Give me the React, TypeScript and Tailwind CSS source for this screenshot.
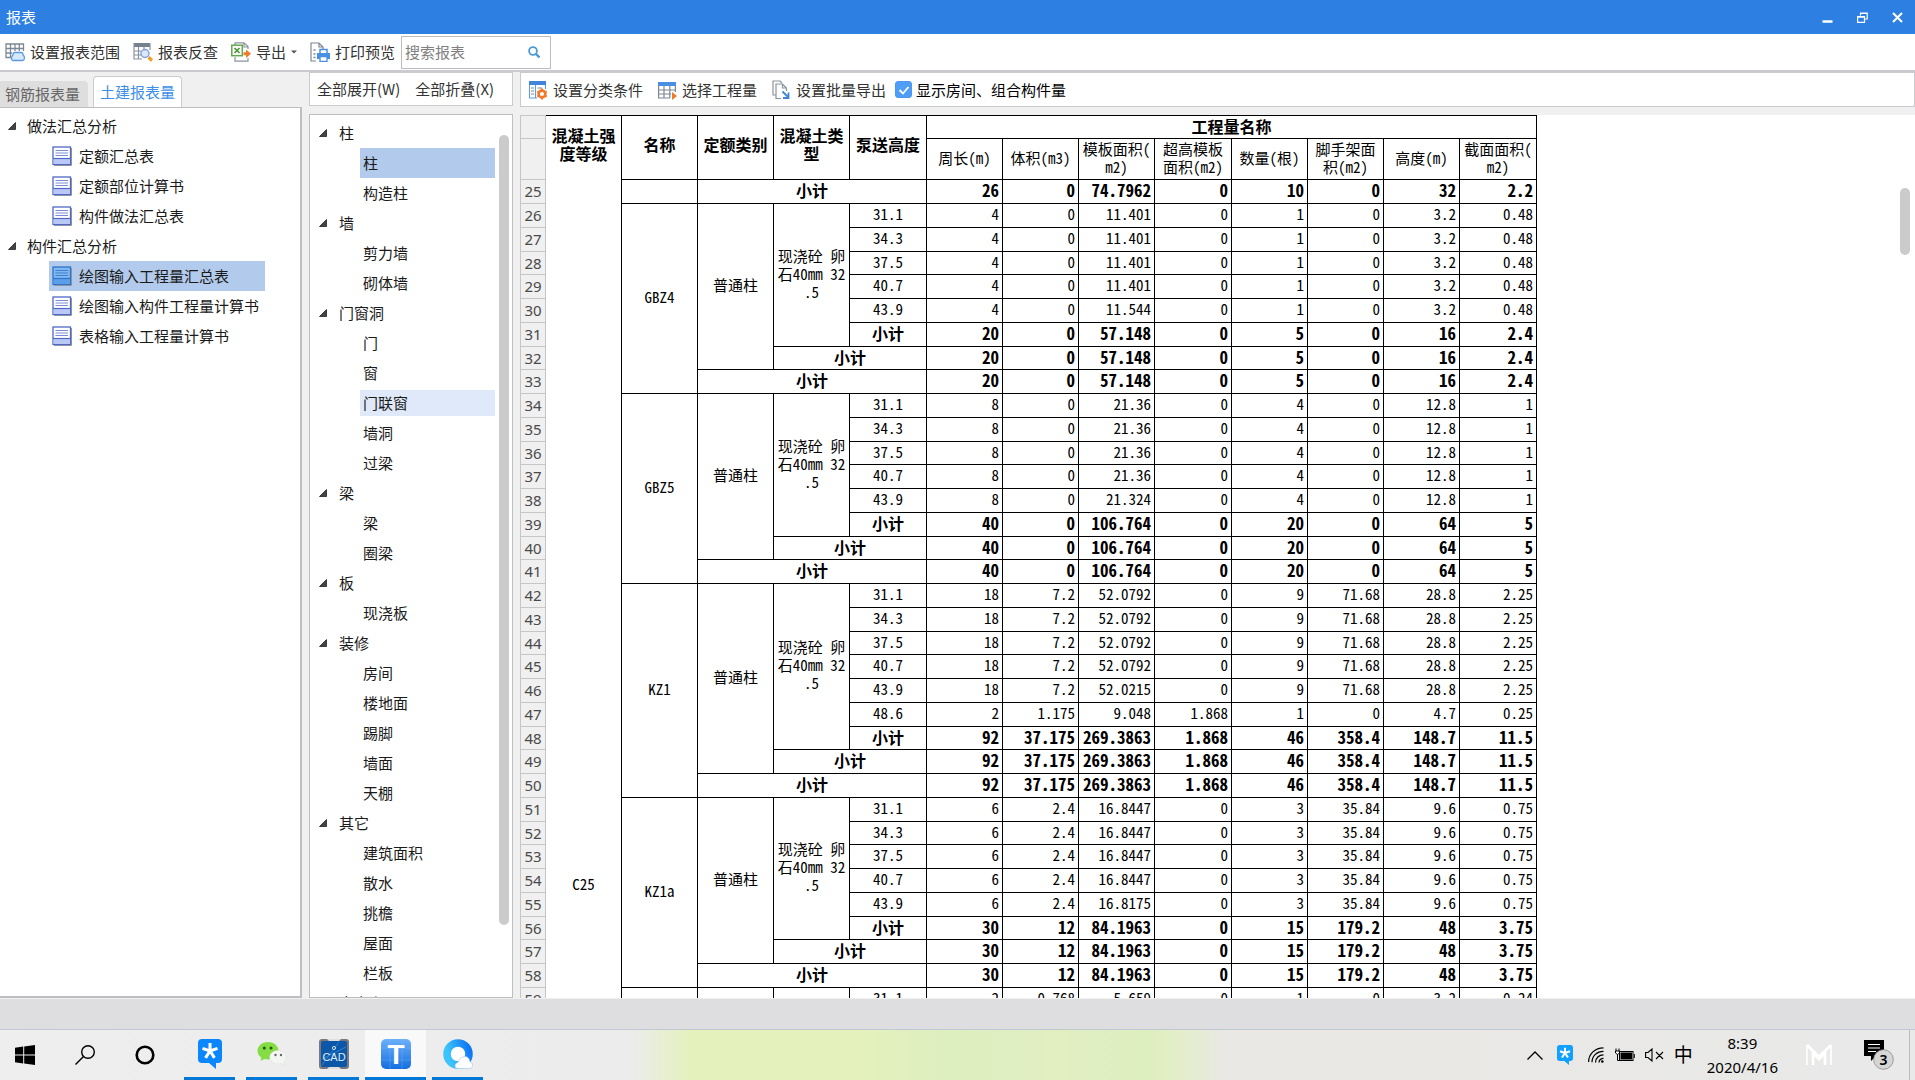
import { Fragment, useState } from "react";
import type { ReactNode } from "react";
import clsx from "clsx";

type TreeNode = { label: string; group?: boolean };
type Group = { name: string; rows: string[][]; total: string[] };

const REPORTS: TreeNode[] = [
  { label: "做法汇总分析", group: true },
  { label: "定额汇总表" },
  { label: "定额部位计算书" },
  { label: "构件做法汇总表" },
  { label: "构件汇总分析", group: true },
  { label: "绘图输入工程量汇总表" },
  { label: "绘图输入构件工程量计算书" },
  { label: "表格输入工程量计算书" },
];

const COMPONENTS = [
  { name: "柱", items: ["柱", "构造柱"] },
  { name: "墙", items: ["剪力墙", "砌体墙"] },
  { name: "门窗洞", items: ["门", "窗", "门联窗", "墙洞", "过梁"] },
  { name: "梁", items: ["梁", "圈梁"] },
  { name: "板", items: ["现浇板"] },
  { name: "装修", items: ["房间", "楼地面", "踢脚", "墙面", "天棚"] },
  { name: "其它", items: ["建筑面积", "散水", "挑檐", "屋面", "栏板"] },
  { name: "自定义", items: [] },
];

const HEIGHTS = ["31.1", "34.3", "37.5", "40.7", "43.9"];

// five storeys share one set of values except for the modelled area
const storeys = (areas: string[], base: string[]) =>
  HEIGHTS.map((h, i) => [h, base[0], base[1], areas[i], ...base.slice(2)]);

const GROUPS: Group[] = [
  {
    name: "GBZ4",
    rows: storeys(["11.401", "11.401", "11.401", "11.401", "11.544"], ["4", "0", "0", "1", "0", "3.2", "0.48"]),
    total: ["20", "0", "57.148", "0", "5", "0", "16", "2.4"],
  },
  {
    name: "GBZ5",
    rows: storeys(["21.36", "21.36", "21.36", "21.36", "21.324"], ["8", "0", "0", "4", "0", "12.8", "1"]),
    total: ["40", "0", "106.764", "0", "20", "0", "64", "5"],
  },
  {
    name: "KZ1",
    rows: [
      ...storeys(
        ["52.0792", "52.0792", "52.0792", "52.0792", "52.0215"],
        ["18", "7.2", "0", "9", "71.68", "28.8", "2.25"]
      ),
      ["48.6", "2", "1.175", "9.048", "1.868", "1", "0", "4.7", "0.25"],
    ],
    total: ["92", "37.175", "269.3863", "1.868", "46", "358.4", "148.7", "11.5"],
  },
  {
    name: "KZ1a",
    rows: storeys(
      ["16.8447", "16.8447", "16.8447", "16.8447", "16.8175"],
      ["6", "2.4", "0", "3", "35.84", "9.6", "0.75"]
    ),
    total: ["30", "12", "84.1963", "0", "15", "179.2", "48", "3.75"],
  },
];

const QUANTITIES = [
  ["周长(m)"],
  ["体积(m3)"],
  ["模板面积(", "m2)"],
  ["超高模板", "面积(m2)"],
  ["数量(根)"],
  ["脚手架面", "积(m2)"],
  ["高度(m)"],
  ["截面面积(", "m2)"],
];

const cell = "border-r border-b border-black p-0 pb-[3px]";

function Lines({ of }: { of: string[] }) {
  return (
    <>
      {of.map((line, i) => (
        <Fragment key={i}>
          {i > 0 && <br />}
          {line}
        </Fragment>
      ))}
    </>
  );
}

function Values({ values, bold }: { values: string[]; bold?: boolean }) {
  return (
    <>
      {values.map((v, i) => (
        <td key={i} className={clsx(cell, "pr-[3px] text-right", bold && "text-[17px] font-bold")}>
          {v}
        </td>
      ))}
    </>
  );
}

function RowNumber({ n }: { n: number }) {
  return (
    <th
      scope="row"
      className={clsx(
        n % 4 === 0 ? "h-[23px]" : "h-6",
        "border-x border-b border-[#c6c6c6] bg-[#f0f0f0] p-0 pb-px text-center font-['Noto_Sans',sans-serif] text-[15px] font-normal text-[#4a4a4a]"
      )}
    >
      {n}
    </th>
  );
}

function Subtotal({ span }: { span: number }) {
  return (
    <td colSpan={span} className={clsx(cell, "text-center text-base/[18px] font-bold")}>
      小计
    </td>
  );
}

function GroupRows({ group, start }: { group: Group; start: number }) {
  const n = group.rows.length;
  return (
    <>
      {group.rows.map(([height, ...values], i) => (
        <tr key={i}>
          <RowNumber n={start + i} />
          {i === 0 && (
            <>
              <td rowSpan={n + 3} className={clsx(cell, "text-center")}>
                {group.name}
              </td>
              <td rowSpan={n + 2} className={clsx(cell, "text-center")}>
                普通柱
              </td>
              <td rowSpan={n + 1} className={clsx(cell, "text-center")}>
                <Lines of={["现浇砼 卵", "石40mm 32", ".5"]} />
              </td>
            </>
          )}
          <td className={clsx(cell, "text-center")}>{height}</td>
          <Values values={values} />
        </tr>
      ))}
      {[1, 2, 3].map((span, i) => (
        <tr key={span}>
          <RowNumber n={start + n + i} />
          <Subtotal span={span} />
          <Values values={group.total} bold />
        </tr>
      ))}
    </>
  );
}

function ReportTable() {
  let next = 26;
  return (
    <table className="w-[1017px] table-fixed border-separate border-spacing-0 font-['Noto_Sans_CJK_SC',sans-serif] text-[15px]/[18px] text-black [font-feature-settings:'hwid']">
      <colgroup>
        <col className="w-[26px]" />
        <col className="w-[76px]" />
        {Array.from({ length: 12 }, (_, i) => (
          <col key={i} className={i % 4 === 3 ? "w-[77px]" : "w-[76px]"} />
        ))}
      </colgroup>
      <thead className="text-base/[18px]">
        <tr>
          <td className="h-6 border border-[#c6c6c6] bg-[#f0f0f0]" />
          {[["混凝土强", "度等级"], ["名称"], ["定额类别"], ["混凝土类", "型"], ["泵送高度"]].map((label, i) => (
            <th
              key={i}
              rowSpan={2}
              className={clsx("border-t border-r border-black p-0 pb-2", i > 0 && "border-b")}
            >
              <Lines of={label} />
            </th>
          ))}
          <th colSpan={8} className={clsx(cell, "border-t")}>
            工程量名称
          </th>
        </tr>
        <tr>
          <td className="h-[41px] border-x border-b border-[#c6c6c6] bg-[#f0f0f0]" />
          {QUANTITIES.map((label, i) => (
            <th key={i} className={clsx(cell, "text-[15px] font-normal")}>
              <Lines of={label} />
            </th>
          ))}
        </tr>
      </thead>
      <tbody>
        <tr>
          <RowNumber n={25} />
          <td rowSpan={35} className="border-r border-black p-0 pt-[695px] text-center align-top">
            C25
          </td>
          <td className={cell} />
          <Subtotal span={3} />
          <Values values={["26", "0", "74.7962", "0", "10", "0", "32", "2.2"]} bold />
        </tr>
        {GROUPS.map((group) => {
          const start = next;
          next += group.rows.length + 3;
          return <GroupRows key={group.name} group={group} start={start} />;
        })}
        <tr>
          <RowNumber n={59} />
          <td className={cell} />
          <td className={cell} />
          <td className={cell} />
          <td className={clsx(cell, "text-center")}>31.1</td>
          <Values values={["2", "0.768", "5.659", "0", "1", "0", "3.2", "0.24"]} />
        </tr>
      </tbody>
    </table>
  );
}

function Triangle({ className }: { className?: string }) {
  return (
    <svg viewBox="0 0 8 8" className={clsx("size-2 shrink-0", className)} aria-hidden="true">
      <path d="M7.5 0.5V7.5H0.5Z" fill="#444" stroke="#222" strokeWidth="0.8" />
    </svg>
  );
}

function ReportIcon({ active }: { active: boolean }) {
  return (
    <svg viewBox="0 0 20 20" className="size-5 shrink-0" aria-hidden="true">
      <path d="M2 19.5H19.5V2" fill="none" stroke="#9a9a9a" strokeWidth="1" />
      <rect x="1" y="1" width="17.5" height="17.5" fill={active ? "#7fb8f2" : "#fff"} stroke={active ? "#2f74c8" : "#5068c8"} strokeWidth="1.3" />
      <rect x="1.6" y="12.5" width="16.3" height="5.5" fill={active ? "#5b9fe8" : "#b9c8f7"} />
      <path d="M1 12.5H18.5" stroke={active ? "#2f74c8" : "#5068c8"} strokeWidth="1.2" />
      <path d="M3.5 4.5H16M3.5 7H16M3.5 9.5H16" stroke={active ? "#3f7fcc" : "#7a8cd8"} strokeWidth="1" />
    </svg>
  );
}

function RangeIcon() {
  return (
    <svg viewBox="0 0 20 20" className="size-5" fill="none" stroke="#7d8894" strokeWidth="1.3" aria-hidden="true">
      <path d="M6 15.5H1V2H18.5V9M1 6.5H18.5M1 11H7M5.5 2V15M10 2V9M14.3 2V9" />
      <rect x="8" y="10.5" width="10" height="6" rx="2" fill="#d6e8fb" stroke="#5b9be6" />
      <path d="M8 13.5C6 13.5 6 18.5 8 18.5H17.5C20 18.5 20 13.5 18 13.5" fill="#d6e8fb" stroke="#5b9be6" />
    </svg>
  );
}

function CheckIcon() {
  return (
    <svg viewBox="0 0 20 20" className="size-5" fill="none" aria-hidden="true">
      <path d="M1 1H17V5H1Z" fill="#75818d" />
      <path d="M1 1V17H9M17 1V8M1 9H8M1 13H8M5.5 5V17M11 5V7" stroke="#8a949e" strokeWidth="1.2" />
      <circle cx="12" cy="11.5" r="4" fill="#dbe7fb" stroke="#7f9fe0" strokeWidth="1.4" />
      <path d="M16.5 14L20 17L18 20L14.5 16.5Z" fill="#f59a22" />
    </svg>
  );
}

function ExportIcon() {
  return (
    <svg viewBox="0 0 20 20" className="size-5" fill="none" aria-hidden="true">
      <path d="M4 3V0.8H13L17 4.5V7M4 15V19.2H17V16M13 1V5H17" stroke="#8a949e" strokeWidth="1.2" />
      <rect x="0.8" y="3.2" width="10.5" height="10.5" fill="#fff" stroke="#62a84c" strokeWidth="1.5" />
      <path d="M3.5 6L8.5 11M8.5 6L3.5 11" stroke="#4c9638" strokeWidth="1.7" />
      <path d="M12.5 10.3H15V7.5L20 11.7L15 16V13.2H12.5Z" fill="#f07a2a" />
    </svg>
  );
}

function PrintIcon() {
  return (
    <svg viewBox="0 0 20 20" className="size-5" fill="none" aria-hidden="true">
      <path d="M6 19H1V1H9L13 5V7M9 1V5H13" stroke="#7d8894" strokeWidth="1.2" />
      <path d="M3.5 8H5.5M3.5 12H5.5M3.5 15.5H5.5" stroke="#7d8894" strokeWidth="1.6" />
      <path d="M10 11V7.5H17V11" stroke="#4a90e2" strokeWidth="1.5" />
      <path d="M7 11H20V17H7Z" fill="#4a90e2" />
      <path d="M10 14.5H17V19.3H10Z" fill="#fff" stroke="#4a90e2" strokeWidth="1.3" />
    </svg>
  );
}

function ClassifyIcon() {
  return (
    <svg viewBox="0 0 20 20" className="size-5" fill="none" aria-hidden="true">
      <path d="M1 1H18V5H1Z" fill="#3f86da" />
      <path d="M1.5 5V18H9M17.5 5V9M7.5 5V18" stroke="#5f9de3" strokeWidth="1.1" />
      <path d="M3 8H6M3 11H6M3 14H6M9.5 8H14" stroke="#7d8894" strokeWidth="1.1" />
      <circle cx="14" cy="14" r="3.4" stroke="#f07a2a" strokeWidth="2.6" />
      <path d="M14 8.6V10M14 18V19.4M9.3 11.3L10.6 12M17.4 16L18.7 16.7M9.3 16.7L10.6 16M17.4 12L18.7 11.3" stroke="#f07a2a" strokeWidth="2" />
    </svg>
  );
}

function PickIcon() {
  return (
    <svg viewBox="0 0 20 20" className="size-5" fill="none" aria-hidden="true">
      <path d="M1 2H19V6H1Z" fill="#4a90e2" />
      <path d="M1.6 6V18H13M18.4 6V12M1.6 10H18.4M1.6 14H14M7 6V18M12.8 6V18" stroke="#7d8894" strokeWidth="1.2" />
      <path d="M15 12L20 16L15 20Z" fill="#f07a2a" />
    </svg>
  );
}

function BatchIcon() {
  return (
    <svg viewBox="0 0 20 20" className="size-5" fill="none" aria-hidden="true">
      <path d="M5 15H2V1H9L11 3" stroke="#8a949e" strokeWidth="1.2" />
      <path d="M10 18.5H5V4H11.5L15.5 8V11M11.5 4V8H15.5" stroke="#8a949e" strokeWidth="1.2" />
      <path d="M11.5 11.5L17 17M17.5 12.5V18H12" stroke="#3f86da" strokeWidth="1.8" />
    </svg>
  );
}

function ToolButton({ icon, children }: { icon?: ReactNode; children: ReactNode }) {
  return (
    <button type="button" className="flex h-8 items-center gap-[5px] rounded px-[5px] whitespace-nowrap text-[#333] hover:bg-gray-100">
      {icon}
      {children}
    </button>
  );
}

function TimLogo({ className, fill }: { className: string; fill: string }) {
  return (
    <svg viewBox="0 0 24 30" className={className} aria-hidden="true">
      <path d="M4 0H20Q24 0 24 4V20Q24 24 20 24H18V30L11 24H4Q0 24 0 20V4Q0 0 4 0Z" fill={fill} />
      <path d="M12 12V4M12 12L4.5 9.300M12 12L19.500 9.300M12 12L7.500 18.800M12 12L16.500 18.800" stroke="#fff" strokeWidth="3" />
    </svg>
  );
}

function AppButton({ label, active, children }: { label: string; active?: boolean; children: ReactNode }) {
  return (
    <button
      type="button"
      aria-label={label}
      className={clsx(
        "flex h-full items-center justify-center border-b-[3px] border-[#0078d7]",
        active ? "-mx-[5px] w-[61px] bg-[#f9f9f9]" : "w-[51px]"
      )}
    >
      {children}
    </button>
  );
}

function Taskbar() {
  return (
    <footer className="flex h-[51px] shrink-0 items-center justify-between border-t border-[#c0c8d4] bg-[linear-gradient(90deg,#eeeeee_0%,#ececec_33%,#e4f1bd_36%,#e4f1bd_45%,#ddeebf_50%,#e1efc1_55%,#ddeebf_60%,#e2efc4_61%,#e9e8e4_64%,#e9e9e9_100%)]">
      <div className="flex h-full items-center">
        <div className="flex items-center gap-[10px]">
          <button type="button" aria-label="开始" className="flex w-[50px] justify-center">
            <svg viewBox="0 0 20 20" className="size-5" aria-hidden="true">
              <path d="M0 2.8L8.2 1.6V9.5H0ZM9.2 1.5L20 0V9.5H9.2ZM0 10.5H8.2V18.4L0 17.2ZM9.2 10.5H20V20L9.2 18.5Z" />
            </svg>
          </button>
          <button type="button" aria-label="搜索" className="flex w-[50px] justify-center">
            <svg viewBox="0 0 20 20" className="size-5" fill="none" stroke="#000" strokeWidth="1.4" aria-hidden="true">
              <circle cx="13" cy="7" r="6.3" />
              <path d="M8.5 11.5L0.5 19.5" />
            </svg>
          </button>
          <button type="button" aria-label="助手" className="flex w-[50px] justify-center">
            <svg viewBox="0 0 20 20" className="size-5" fill="none" stroke="#000" strokeWidth="2.6" aria-hidden="true">
              <circle cx="10" cy="10" r="8.3" />
            </svg>
          </button>
        </div>
        <div className="ml-[14px] flex h-full items-center gap-[11px]">
          <AppButton label="TIM">
            <TimLogo className="h-[30px] w-6" fill="#0a86ff" />
          </AppButton>
          <AppButton label="微信">
            <svg viewBox="0 0 30 26" className="h-[26px] w-[30px]" aria-hidden="true">
              <path d="M11 1C5 1 0.5 5 0.5 9.7C0.5 12.5 2 15 4.300 16.500L3.500 20L7.500 18C8.600 18.300 9.800 18.500 11 18.500C17 18.500 21.500 14.500 21.500 9.700C21.500 5 17 1 11 1Z" fill="#86dc44" />
              <circle cx="7.300" cy="7" r="1.500" fill="#1f5a10" />
              <circle cx="14" cy="7" r="1.500" fill="#1f5a10" />
              <path d="M21 9.500C16.300 9.500 12.800 12.500 12.800 16.200C12.800 20 16.300 23 21 23C22 23 23 22.800 23.800 22.600L27.300 24.500L26.600 21.500C28.400 20.300 29.300 18.400 29.300 16.200C29.300 12.500 25.700 9.500 21 9.500Z" fill="#f4f6f4" stroke="#dcdcdc" strokeWidth="0.500" />
              <circle cx="18.500" cy="14" r="1.200" fill="#666" />
              <circle cx="24" cy="14" r="1.200" fill="#666" />
            </svg>
          </AppButton>
          <AppButton label="CAD">
            <svg viewBox="0 0 30 30" className="size-[30px]" aria-hidden="true">
              <rect width="30" height="30" rx="3" fill="#77797d" />
              <path d="M8 0H22L20 2H10ZM8 30H22L20 28H10Z" fill="#e0e0e0" />
              <rect x="2" y="2" width="26" height="26" rx="2" fill="#0d57a8" />
              <path d="M3 20L27 8M3 26L20 3" stroke="#2e7fd0" strokeWidth="1" />
              <circle cx="15" cy="9" r="1.600" fill="none" stroke="#cfe2f5" />
              <text x="15" y="21.500" textAnchor="middle" fontFamily="Liberation Sans, sans-serif" fontSize="11" fill="#dcecff">
                CAD
              </text>
            </svg>
          </AppButton>
          <AppButton label="土建计量" active>
            <svg viewBox="0 0 30 30" className="size-[30px]" aria-hidden="true">
              <defs>
                <linearGradient id="civil" x1="0" y1="0" x2="0" y2="1">
                  <stop offset="0" stopColor="#6cb0fa" />
                  <stop offset="1" stopColor="#146fe0" />
                </linearGradient>
              </defs>
              <rect width="30" height="30" rx="5" fill="url(#civil)" />
              <path d="M0 9H30M0 21H30M9 0V30M21 0V30" stroke="#8cc2ff" strokeWidth="0.500" opacity="0.600" />
              <text x="15" y="24.500" textAnchor="middle" fontFamily="Liberation Sans, sans-serif" fontWeight="bold" fontSize="28" fill="#fff">
                T
              </text>
            </svg>
          </AppButton>
          <AppButton label="浏览器">
            <svg viewBox="0 0 30 30" className="size-[30px]" aria-hidden="true">
              <defs>
                <linearGradient id="ring" x1="0" y1="0.300" x2="1" y2="0">
                  <stop offset="0" stopColor="#3cc4fb" />
                  <stop offset="1" stopColor="#0d74f2" />
                </linearGradient>
              </defs>
              <circle cx="15" cy="15" r="11" fill="#fff" stroke="url(#ring)" strokeWidth="7.500" />
              <path d="M15 29.500C11 29.500 11 24 15 23.500C16 20 19 17.500 22 17.500C25 17.500 26.500 20 26.800 22.500C30.500 23.500 30.500 29.500 26.500 29.500Z" fill="#fff" stroke="#9cc4ee" strokeWidth="0.600" />
            </svg>
          </AppButton>
        </div>
      </div>

      <div className="flex h-full items-center font-['Noto_Sans','Noto_Sans_CJK_SC',sans-serif] text-black">
        <svg viewBox="0 0 16 9" className="mr-[14px] h-[9px] w-4" fill="none" stroke="#000" strokeWidth="1.3" aria-hidden="true">
          <path d="M0.500 8.500L8 1L15.500 8.500" />
        </svg>
        <TimLogo className="mr-[15px] h-5 w-4" fill="#12a0ff" />
        <svg viewBox="0 0 16 16" className="mr-[11px] size-4" fill="none" stroke="#000" strokeWidth="1.200" aria-hidden="true">
          <path d="M0.600 15C0.600 7 7 0.800 15.500 0.800M4 15.300C4 9 9 4.300 15.500 4.300M7.500 15.500C7.500 11 11 7.800 15.500 7.800" />
          <path d="M11 15.500C11 13 13 11.300 15.500 11.300" />
          <circle cx="14.300" cy="14.500" r="1.300" fill="#000" stroke="none" />
        </svg>
        <svg viewBox="0 0 20 14" className="mr-[10px] h-[14px] w-5" fill="none" stroke="#000" aria-hidden="true">
          <rect x="4.500" y="3.500" width="13.500" height="9" />
          <rect x="6" y="5" width="10.500" height="6" fill="#000" />
          <path d="M19.300 6V10M2.500 6V12.500H5M1 0.500V3M4 0.500V3" />
          <path d="M0.500 3H4.500V5L2.500 6.500L0.500 5Z" fill="#fff" />
        </svg>
        <svg viewBox="0 0 19 14" className="mr-[10px] h-[14px] w-[19px]" fill="none" stroke="#000" strokeWidth="1.100" aria-hidden="true">
          <path d="M0.600 4.500H3L7 1V13L3 9.500H0.600ZM11 4L18 11M18 4L11 11" />
        </svg>
        <span className="mr-[14px] text-[19px]">中</span>
        <time className="text-center text-[15px]/6">
          8:39
          <br />
          2020/4/16
        </time>
        <svg viewBox="0 0 26 22" className="mr-[26px] ml-7 h-[22px] w-[26px]" fill="none" stroke="#fff" strokeWidth="2" aria-hidden="true">
          <path d="M1 1V21M25 1V21" strokeWidth="1.600" />
          <path d="M1 1L13 13L25 1M7 21V9L13 15L19 9V21" strokeWidth="2.800" />
        </svg>
        <button type="button" aria-label="通知" className="mr-[15px] ml-[6px]">
          <svg viewBox="0 0 30 30" className="size-[30px]" aria-hidden="true">
            <path d="M0 0H20V16H12L7 21V16H0Z" />
            <path d="M4 4.500H16M4 8H16M4 11.500H12" stroke="#fff" strokeWidth="1.200" />
            <circle cx="19.500" cy="19.500" r="9.800" fill="#d6d6d6" stroke="#8a8a8a" strokeWidth="0.800" />
            <text x="19.500" y="24.500" textAnchor="middle" fontFamily="Noto Sans, sans-serif" fontWeight="600" fontSize="14">
              3
            </text>
          </svg>
        </button>
        <div className="mr-[5px] h-full w-px bg-[#bdbdbd]" />
      </div>
    </footer>
  );
}

export default function App() {
  const [report, setReport] = useState("绘图输入工程量汇总表");
  const [component, setComponent] = useState("柱/柱");
  const [showRooms, setShowRooms] = useState(true);

  return (
    <div className="flex h-screen flex-col overflow-hidden bg-[#f0f0f0] font-['Noto_Sans_CJK_SC',sans-serif] text-[15px]/6 text-[#1a1a1a]">
      <header className="flex h-[34px] shrink-0 items-center justify-between bg-[#2d80e2] pr-3 pl-[6px] text-white">
        <h1>报表</h1>
        <div className="flex items-center gap-6">
          <button type="button" aria-label="最小化">
            <svg viewBox="0 0 11 11" className="size-[11px]" aria-hidden="true">
              <path d="M0.500 9.500H10.500" stroke="#fff" strokeWidth="2.500" />
            </svg>
          </button>
          <button type="button" aria-label="还原">
            <svg viewBox="0 0 11 11" className="size-[11px]" fill="none" stroke="#fff" aria-hidden="true">
              <path d="M3.500 3.500V1H10.200V7H8M3.500 1.300H10.200" strokeWidth="1.200" />
              <path d="M0.600 4.500H7.500V10.400H0.600ZM0.600 5.200H7.500" strokeWidth="1.200" />
            </svg>
          </button>
          <button type="button" aria-label="关闭">
            <svg viewBox="0 0 11 11" className="size-[11px]" stroke="#fff" strokeWidth="2" aria-hidden="true">
              <path d="M1 1L10 10M10 1L1 10" />
            </svg>
          </button>
        </div>
      </header>

      <div className="flex h-[38px] shrink-0 items-center border-b-2 border-[#c9cbce] bg-white">
        <div className="flex items-center gap-[3px]">
          <ToolButton icon={<RangeIcon />}>设置报表范围</ToolButton>
          <ToolButton icon={<CheckIcon />}>报表反查</ToolButton>
          <ToolButton icon={<ExportIcon />}>
            导出
            <svg viewBox="0 0 8 4" className="h-1 w-[6px]" aria-hidden="true">
              <path d="M0 0H8L4 4Z" fill="#555" />
            </svg>
          </ToolButton>
          <ToolButton icon={<PrintIcon />}>打印预览</ToolButton>
        </div>
        <label className="ml-px flex h-[33px] w-[150px] items-center border border-[#bcbcbc] bg-white pr-[10px] pl-[3px]">
          <input type="text" aria-label="搜索报表" placeholder="搜索报表" className="min-w-0 flex-1 outline-none placeholder:text-[#808080]" />
          <svg viewBox="0 0 12 12" className="size-3" fill="none" stroke="#4a9ad4" strokeWidth="1.800" aria-hidden="true">
            <circle cx="5" cy="5" r="3.900" />
            <path d="M8 8L11.500 11.500" strokeWidth="2.400" />
          </svg>
        </label>
      </div>

      <div className="flex min-h-0 flex-1 gap-[7px] pb-px">
        <aside className="flex w-[302px] shrink-0 flex-col">
          <div role="tablist" className="flex h-[35px] items-end gap-[5px]">
            <button type="button" role="tab" aria-selected="false" className="h-[26px] w-[88px] rounded-tr bg-[#dedede] pr-[3px] text-center text-[#666]">
              钢筋报表量
            </button>
            <button type="button" role="tab" aria-selected="true" className="h-[31px] w-[89px] rounded-t border border-b-0 border-[#c9cbce] bg-white text-center text-[#3d8fe8]">
              土建报表量
            </button>
          </div>
          <ul className="flex-1 border-t border-r-2 border-b-2 border-[#bcbec0] bg-white pt-[3px]">
            {REPORTS.map(({ label, group }) =>
              group ? (
                <li key={label} className="flex h-[30px] items-center gap-[11px] pl-2">
                  <Triangle />
                  {label}
                </li>
              ) : (
                <li key={label} className="pl-[49px]">
                  <button
                    type="button"
                    onClick={() => setReport(label)}
                    className={clsx(
                      "flex h-[30px] w-[216px] items-center gap-[7px] pl-[3px] whitespace-nowrap",
                      label === report && "bg-[#b2cbec]"
                    )}
                  >
                    <ReportIcon active={label === report} />
                    {label}
                  </button>
                </li>
              )
            )}
          </ul>
        </aside>

        <section className="flex w-[204px] shrink-0 flex-col gap-2">
          <div className="flex h-[34px] shrink-0 items-center gap-[5px] border border-[#c9cbce] bg-white pl-[2px]">
            <ToolButton>全部展开(W)</ToolButton>
            <ToolButton>全部折叠(X)</ToolButton>
          </div>
          <div className="relative min-h-0 flex-1 overflow-hidden border border-[#bcbec0] bg-white pt-[3px]">
            {COMPONENTS.map(({ name, items }) => (
              <div key={name}>
                <div className="flex h-[30px] items-center gap-3 pl-[9px]">
                  <Triangle />
                  {name}
                </div>
                {items.map((item) => {
                  const id = `${name}/${item}`;
                  return (
                    <button
                      key={item}
                      type="button"
                      onClick={() => setComponent(id)}
                      className="flex h-[30px] w-full items-center pr-[17px] pl-[50px] text-left"
                    >
                      <span
                        className={clsx(
                          "flex flex-1 items-center pl-[3px]",
                          id === component ? "h-[30px] bg-[#b2cbec]" : "h-[26px]",
                          item === "门联窗" && "bg-[#dfe9f9]"
                        )}
                      >
                        {item}
                      </span>
                    </button>
                  );
                })}
              </div>
            ))}
            <div className="absolute top-5 right-[3px] h-[790px] w-[10px] rounded-full bg-[#cbcbcb]" />
          </div>
        </section>

        <main className="flex min-w-0 flex-1 flex-col gap-2">
          <div className="flex h-[35px] shrink-0 items-center gap-1 border border-[#c9cbce] bg-white pl-[2px]">
            <ToolButton icon={<ClassifyIcon />}>设置分类条件</ToolButton>
            <ToolButton icon={<PickIcon />}>选择工程量</ToolButton>
            <ToolButton icon={<BatchIcon />}>设置批量导出</ToolButton>
            <label className="flex items-center gap-1 text-black">
              <span className="grid size-[17px] place-items-center">
                <input
                  type="checkbox"
                  checked={showRooms}
                  onChange={(e) => setShowRooms(e.target.checked)}
                  className="col-start-1 row-start-1 size-[17px] appearance-none rounded-[3px] border border-[#4a98f0] checked:bg-[#4f9ef5]"
                />
                {showRooms && (
                  <svg viewBox="0 0 12 12" className="pointer-events-none col-start-1 row-start-1 size-3" fill="none" stroke="#fff" strokeWidth="1.800" aria-hidden="true">
                    <path d="M1.500 6L5 9.500L10.500 3" />
                  </svg>
                )}
              </span>
              显示房间、组合构件量
            </label>
          </div>
          <div className="relative min-h-0 flex-1 overflow-hidden bg-white">
            <ReportTable />
            <div className="absolute top-[73px] right-[5px] h-[67px] w-[10px] rounded-full bg-[#cbcbcb]" />
          </div>
        </main>
      </div>

      <div className="h-[30px] shrink-0 bg-[#dedee0]" />
      <Taskbar />
    </div>
  );
}
